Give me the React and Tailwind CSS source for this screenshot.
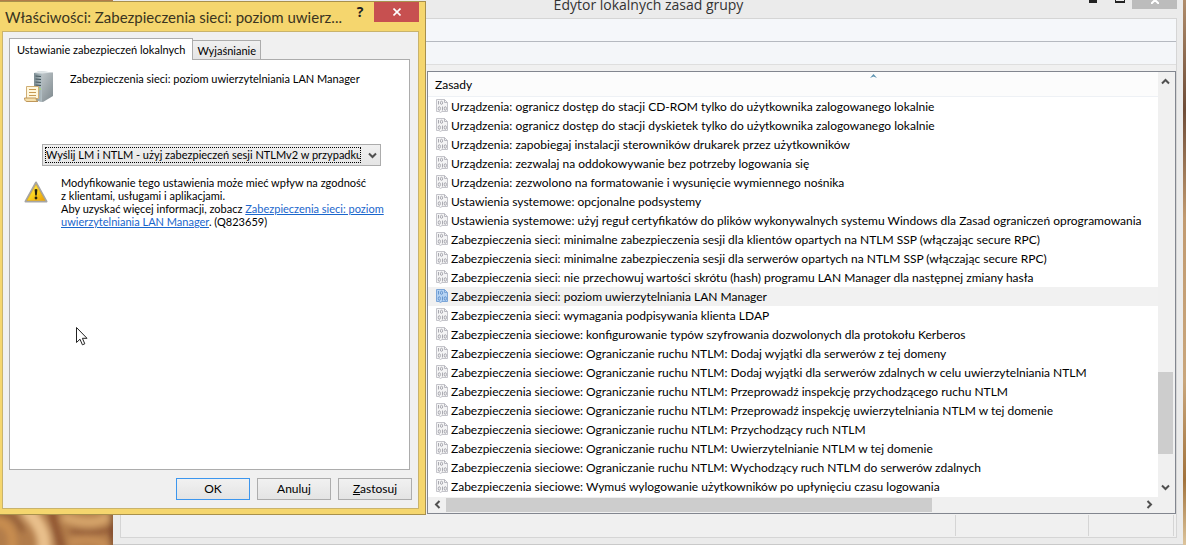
import { useState } from 'react'
import clsx from 'clsx'

const policies = [
  'Urządzenia: ogranicz dostęp do stacji CD-ROM tylko do użytkownika zalogowanego lokalnie',
  'Urządzenia: ogranicz dostęp do stacji dyskietek tylko do użytkownika zalogowanego lokalnie',
  'Urządzenia: zapobiegaj instalacji sterowników drukarek przez użytkowników',
  'Urządzenia: zezwalaj na oddokowywanie bez potrzeby logowania się',
  'Urządzenia: zezwolono na formatowanie i wysunięcie wymiennego nośnika',
  'Ustawienia systemowe: opcjonalne podsystemy',
  'Ustawienia systemowe: użyj reguł certyfikatów do plików wykonywalnych systemu Windows dla Zasad ograniczeń oprogramowania',
  'Zabezpieczenia sieci: minimalne zabezpieczenia sesji dla klientów opartych na NTLM SSP (włączając secure RPC)',
  'Zabezpieczenia sieci: minimalne zabezpieczenia sesji dla serwerów opartych na NTLM SSP (włączając secure RPC)',
  'Zabezpieczenia sieci: nie przechowuj wartości skrótu (hash) programu LAN Manager dla następnej zmiany hasła',
  'Zabezpieczenia sieci: poziom uwierzytelniania LAN Manager',
  'Zabezpieczenia sieci: wymagania podpisywania klienta LDAP',
  'Zabezpieczenia sieciowe: konfigurowanie typów szyfrowania dozwolonych dla protokołu Kerberos',
  'Zabezpieczenia sieciowe: Ograniczanie ruchu NTLM: Dodaj wyjątki dla serwerów z tej domeny',
  'Zabezpieczenia sieciowe: Ograniczanie ruchu NTLM: Dodaj wyjątki dla serwerów zdalnych w celu uwierzytelniania NTLM',
  'Zabezpieczenia sieciowe: Ograniczanie ruchu NTLM: Przeprowadź inspekcję przychodzącego ruchu NTLM',
  'Zabezpieczenia sieciowe: Ograniczanie ruchu NTLM: Przeprowadź inspekcję uwierzytelniania NTLM w tej domenie',
  'Zabezpieczenia sieciowe: Ograniczanie ruchu NTLM: Przychodzący ruch NTLM',
  'Zabezpieczenia sieciowe: Ograniczanie ruchu NTLM: Uwierzytelnianie NTLM w tej domenie',
  'Zabezpieczenia sieciowe: Ograniczanie ruchu NTLM: Wychodzący ruch NTLM do serwerów zdalnych',
  'Zabezpieczenia sieciowe: Wymuś wylogowanie użytkowników po upłynięciu czasu logowania',
]

const Wallpaper = () => (
  <svg className="absolute inset-0 h-full w-full" viewBox="0 0 1186 545" preserveAspectRatio="none" aria-hidden="true">
    <defs>
      <linearGradient id="edge" x1="0" y1="0" x2="0" y2="1">
        <stop offset="0" stopColor="#b08d6c" />
        <stop offset="0.2" stopColor="#6e4c38" />
        <stop offset="0.4" stopColor="#c19a70" />
        <stop offset="0.7" stopColor="#c9a67c" />
        <stop offset="0.88" stopColor="#a1723c" />
        <stop offset="1" stopColor="#dcc49c" />
      </linearGradient>
      <filter id="soft" x="-20%" y="-50%" width="140%" height="200%">
        <feGaussianBlur stdDeviation="3" />
      </filter>
    </defs>
    <rect width="1186" height="545" fill="#b27c4a" />
    <rect x="1176" width="10" height="545" fill="url(#edge)" />
    <g filter="url(#soft)" fill="none" strokeLinecap="round">
      <path d="M-4 522C6 522 14 530 12 548" stroke="#c98e50" strokeWidth="9" />
      <path d="M0 512C12 514 18 520 22 530" stroke="#8f5a34" strokeWidth="5" />
      <path d="M28 512C36 520 46 532 44 550" stroke="#e9c08c" strokeWidth="14" />
      <path d="M52 512C54 524 58 536 62 548" stroke="#8f5431" strokeWidth="8" />
      <path d="M66 518C82 523 96 524 106 518" stroke="#d6a56c" strokeWidth="10" />
      <path d="M72 531C84 534 96 533 108 530" stroke="#8a5030" strokeWidth="4" />
      <path d="M72 542C86 538 98 540 108 546" stroke="#c88f56" strokeWidth="8" />
      <path d="M113 512V548" stroke="#6a3421" strokeWidth="5" />
    </g>
  </svg>
)

const PolicyIcon = ({ active }) => (
  <svg className="h-4 w-[14px] shrink-0" viewBox="0 0 14 16" fill="none" aria-hidden="true">
    <path
      d="M1.5 1.5H9.5L12.5 4.5V13.5H7L5.5 14.5L4 13.5H1.5Z"
      fill={active ? '#b4d2f3' : '#f4f4f5'}
      stroke={active ? '#7ba5d8' : '#c4c4ca'}
    />
    <path d="M9.5 1.5V4.5H12.5" stroke={active ? '#7ba5d8' : '#b9b9c0'} />
    <g stroke={active ? '#5f8fc9' : '#a0a0a8'} strokeWidth="0.9">
      <path d="M3.5 3V6.5M7.5 8.5V12.5" />
      <ellipse cx="6.5" cy="4.8" rx="1.1" ry="1.6" />
      <ellipse cx="4.3" cy="10.5" rx="1.1" ry="1.8" />
      <ellipse cx="10.3" cy="10.5" rx="1.1" ry="1.8" />
    </g>
  </svg>
)

const Chevron = ({ className }) => (
  <svg className={clsx('h-[9px] w-[9px]', className)} viewBox="0 0 9 9" fill="none" stroke="#505050" strokeWidth="2" aria-hidden="true">
    <path d="M1 2.5L4.5 6L8 2.5" />
  </svg>
)

const ServerIcon = () => (
  <svg className="h-8 w-8 shrink-0" viewBox="0 0 32 32" aria-hidden="true">
    <defs>
      <linearGradient id="tower" x1="0" y1="0" x2="1" y2="1">
        <stop offset="0" stopColor="#d3d9dc" />
        <stop offset="1" stopColor="#7d888d" />
      </linearGradient>
      <linearGradient id="front" x1="0" y1="0" x2="1" y2="0">
        <stop offset="0" stopColor="#7b8c92" />
        <stop offset="1" stopColor="#b4c0c5" />
      </linearGradient>
    </defs>
    <path d="M10 2L15 0L29 1.5V25L19 31L10 29Z" fill="url(#tower)" />
    <path d="M10 2L18 2.5V31L10 29Z" fill="url(#front)" />
    <path d="M10 2L15 0L29 1.5L18 2.5Z" fill="#dfe5e7" />
    <path d="M11.500 5L17 5.500M11.500 8L17 8.500M11.500 11L17 11.500M11.500 14L17 14.500" stroke="#43555b" strokeWidth="1.2" />
    <circle cx="16" cy="18" r="0.9" fill="#a4e06c" />
    <path d="M2.500 15.500H14.500V27.500H2.500Z" fill="#fff7dd" stroke="#d0ae74" />
    <path d="M0.500 27H12C12 30 14 30.500 14 30.500H3C1 30.500 0.500 28.500 0.500 27Z" fill="#f5dfaa" stroke="#bf975a" />
    <path d="M5 18.500H12M5 21.500H12M5 24.500H12" stroke="#c79a52" />
  </svg>
)

const WarningIcon = () => (
  <svg className="h-[22px] w-6 shrink-0" viewBox="0 0 24 22" aria-hidden="true">
    <defs>
      <linearGradient id="warn" x1="0" y1="0" x2="1" y2="1">
        <stop offset="0" stopColor="#fff07a" />
        <stop offset="0.5" stopColor="#fbd21c" />
        <stop offset="1" stopColor="#e99a08" />
      </linearGradient>
    </defs>
    <path d="M12 1.500L22.500 20.500H1.500Z" fill="#e8e8e8" stroke="#a5a5a5" strokeWidth="2" strokeLinejoin="round" />
    <path d="M12 3.500L21 19.500H3Z" fill="url(#warn)" stroke="#dba310" strokeWidth="0.6" strokeLinejoin="round" />
    <path d="M10.600 8.500Q12 7.300 13.400 8.500L12.800 14.500H11.200Z" fill="#26210f" />
    <circle cx="12" cy="17" r="1.400" fill="#26210f" />
  </svg>
)

const PolicyList = () => (
  <div className="flex min-w-0 flex-1 flex-col border border-[#82868f] bg-white">
    <div className="flex">
      <div className="min-w-0 flex-1 overflow-hidden pb-px">
        <table className="w-full table-fixed border-collapse text-left">
          <thead>
            <tr className="h-6">
              <th className="relative border-b border-[#eef1f5] bg-[#fcfcfc] p-0 pt-[2px] pl-[7px] font-normal">
                Zasady
                <svg className="absolute top-[2px] left-[442px] h-1 w-[7px]" viewBox="0 0 7 4" fill="#5b93b0" aria-hidden="true">
                  <path d="M0 4L3.500 0L7 4L3.500 2.500Z" />
                </svg>
              </th>
            </tr>
          </thead>
          <tbody>
            {policies.map((policy, i) => (
              <tr key={policy} className={clsx('h-[19px]', i === 10 && 'bg-[#f1f1f1]')}>
                <td className="p-0">
                  <div className="flex items-center gap-[2px] pl-[7px] leading-[19px] whitespace-nowrap">
                    <PolicyIcon active={i === 10} />
                    {policy}
                  </div>
                </td>
              </tr>
            ))}
          </tbody>
        </table>
      </div>
      <div className="flex w-[17px] flex-col items-center bg-[#f0f0f0] pr-[2px]">
        <div className="flex h-[18px] items-center"><Chevron className="rotate-180" /></div>
        <div className="flex-[282]" />
        <div className="w-full flex-[82] bg-[#cdcdcd]" />
        <div className="flex-[24]" />
        <div className="flex h-[18px] items-center"><Chevron /></div>
      </div>
    </div>
    <div className="flex h-4 items-center bg-[#f0f0f0] pr-[17px]">
      <div className="flex w-[18px] justify-center"><Chevron className="rotate-90" /></div>
      <div className="h-[14px] flex-[486] bg-[#cdcdcd]" />
      <div className="flex-[208]" />
      <div className="flex w-[18px] justify-center"><Chevron className="-rotate-90" /></div>
    </div>
  </div>
)

const EditorWindow = () => (
  <div className="absolute inset-y-0 right-[3px] left-[113px] overflow-hidden border-b border-[#c9c9c9] bg-[#ebebeb] pr-[6px] pl-[7px] font-[Lato,sans-serif] text-xs text-black">
    <div className="relative flex h-[18px] items-end justify-center">
      <h1 className="font-['Open_Sans',sans-serif] text-sm leading-[26px] text-[#333]">Edytor lokalnych zasad grupy</h1>
      <div className="absolute top-0 right-0 flex">
        <button aria-label="Minimalizuj" className="flex h-[9px] w-[30px] items-start justify-center">
          <span className="h-[3px] w-2 bg-[#222]" />
        </button>
        <button aria-label="Maksymalizuj" className="flex h-[9px] w-6 items-start justify-center">
          <span className="h-[3px] w-[10px] border border-t-0 border-b-2 border-[#222]" />
        </button>
        <button aria-label="Zamknij edytor" className="flex h-[9px] w-[45px] items-start justify-center bg-[#bcbcbc]">
          <svg className="h-1 w-2" viewBox="0 4 8 4" stroke="#fff" strokeWidth="2" aria-hidden="true">
            <path d="M0 0L8 8M8 0L0 8" />
          </svg>
        </button>
      </div>
    </div>
    <div className="border border-[#d5d5d5] bg-[#f0f0f0]">
      <div className="h-[23px] border-b border-[#b5b9c0] bg-[#f5f7fa]" />
      <div className="h-[23px] border-b border-[#dedede] bg-[#f4f6f9]" />
      <div className="flex pt-[6px]">
        <div className="w-[306px] shrink-0" />
        <PolicyList />
      </div>
      <div className="flex h-[23px] justify-end py-px">
        <div className="w-[133px] border-l border-[#d5d5d5]" />
        <div className="w-[86px] border-x border-[#d5d5d5]" />
        <div className="w-[2px]" />
      </div>
    </div>
  </div>
)

const DialogButton = ({ primary, children }) => (
  <button
    className={clsx(
      'h-[22px] w-[74px] border bg-linear-to-b from-[#f1f1f1] to-[#e4e4e4] text-xs',
      primary ? 'border-[#3c96ee]' : 'border-[#adadad]'
    )}
  >
    {children}
  </button>
)

const PropertiesDialog = () => {
  const [tab, setTab] = useState('local')

  return (
    <div
      role="dialog"
      aria-labelledby="dialog-title"
      className="absolute top-px -left-1 w-[430px] border border-[#a8904c] bg-[#f5d66e] pr-[6px] pb-[5px] pl-[5px] font-[Lato,sans-serif] text-[11px] leading-[13px] text-black"
    >
      <div className="flex h-[29px] items-start pl-[3px]">
        <h2 id="dialog-title" className="min-w-0 flex-1 text-[15px] leading-[30px] whitespace-nowrap text-[#3a3420]">
          Właściwości: Zabezpieczenia sieci: poziom uwierz...
        </h2>
        <button aria-label="Pomoc" className="w-7 shrink-0 font-['Open_Sans',sans-serif] text-sm leading-5 font-bold text-[#222]">?</button>
        <button aria-label="Zamknij" className="flex h-5 w-[45px] shrink-0 items-center justify-center bg-[#c75050]">
          <svg className="h-2 w-2" viewBox="0 0 8 8" stroke="#fff" strokeWidth="1.6" aria-hidden="true">
            <path d="M0.500 0.500L7.500 7.500M7.500 0.500L0.500 7.500" />
          </svg>
        </button>
      </div>

      <div className="border border-[#c9b36c] bg-[#f0f0f0] px-[6px] pt-[6px] pb-2">
        <div role="tablist" className="relative flex items-end">
          <button
            role="tab"
            aria-selected={tab === 'local'}
            onClick={() => setTab('local')}
            className="-mb-px h-[22px] border border-b-0 border-[#acacac] bg-white px-[7px]"
          >
            Ustawianie zabezpieczeń lokalnych
          </button>
          <button
            role="tab"
            aria-selected={tab === 'explain'}
            onClick={() => setTab('explain')}
            className="h-[19px] border border-b-0 border-l-0 border-[#acacac] bg-linear-to-b from-[#f0f0f0] to-[#e5e5e5] px-1"
          >
            Wyjaśnianie
          </button>
        </div>

        <div role="tabpanel" className="mr-[2px] h-[411px] border border-[#acacac] bg-white px-[14px] pt-[11px]">
          <div className="flex gap-[14px]">
            <ServerIcon />
            <p className="pt-px">Zabezpieczenia sieci: poziom uwierzytelniania LAN Manager</p>
          </div>

          <div className="mt-[41px] mr-[14px] ml-[18px] flex h-[22px] items-center border border-[#acacac] bg-linear-to-b from-[#f0f0f0] to-[#e5e5e5] pl-[2px]">
            <select
              aria-label="Poziom uwierzytelniania"
              className="h-4 min-w-0 flex-1 appearance-none overflow-hidden border border-dotted border-black leading-[14px] outline-none"
            >
              <option>Wyślij LM i NTLM - użyj zabezpieczeń sesji NTLMv2 w przypadku negocjacji</option>
            </select>
            <Chevron className="mr-[3px] ml-[7px]" />
          </div>

          <div className="mt-[10px] flex gap-[13px]">
            <div className="pt-[5px]"><WarningIcon /></div>
            <p>
              Modyfikowanie tego ustawienia może mieć wpływ na zgodność
              <br />
              z klientami, usługami i aplikacjami.
              <br />
              Aby uzyskać więcej informacji, zobacz{' '}
              <a href="#ntlm" className="text-[#1a66cc] underline">
                Zabezpieczenia sieci: poziom
                <br />
                uwierzytelniania LAN Manager
              </a>
              . (Q823659)
            </p>
          </div>
        </div>

        <div className="mt-2 flex justify-end gap-[7px]">
          <DialogButton primary>OK</DialogButton>
          <DialogButton>Anuluj</DialogButton>
          <DialogButton><span className="underline">Z</span>astosuj</DialogButton>
        </div>
      </div>
    </div>
  )
}

const Cursor = () => (
  <svg className="absolute top-[326px] left-[75px] h-5 w-[13px]" viewBox="0 0 13 20" aria-hidden="true">
    <path d="M1.500 1.500V16.500L5 13.200L7.400 18.800L9.800 17.800L7.400 12.300H12Z" fill="#fff" stroke="#222" />
  </svg>
)

const App = () => {
  return (
    <main className="relative h-screen overflow-hidden">
      <Wallpaper />
      <EditorWindow />
      <PropertiesDialog />
      <Cursor />
    </main>
  )
}

export default App
